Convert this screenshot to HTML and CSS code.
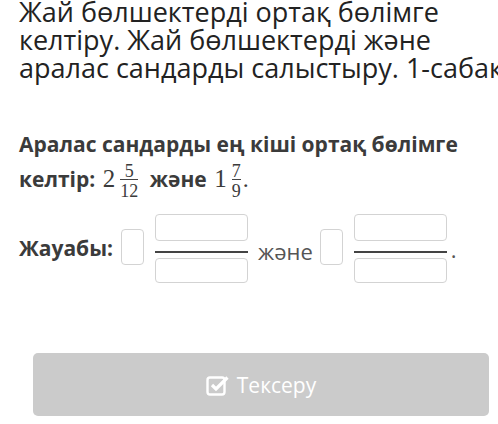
FILE: index.html
```html
<!DOCTYPE html>
<html>
<head>
<meta charset="utf-8">
<link rel="stylesheet" href="styles.css">
</head>
<body>
<div class="page">
  <h1 class="title">Жай бөлшектерді ортақ бөлімге<br>келтіру. Жай бөлшектерді және<br>аралас сандарды салыстыру. 1-сабақ</h1>
  <div class="question">
    <div class="q-line">Аралас сандарды ең кіші ортақ бөлімге</div>
    <div class="q-line q-second">келтір: <span class="whole">2</span><span class="frac"><span class="num">5</span><span class="bar"></span><span class="den">12</span></span> және <span class="whole">1</span><span class="frac"><span class="num">7</span><span class="bar"></span><span class="den">9</span></span><span class="dot">.</span></div>
  </div>
  <div class="answer">
    <span class="label">Жауабы:</span>
    <span class="box whole-box"></span>
    <span class="afrac"><span class="box nbox"></span><span class="abar"></span><span class="box dbox"></span></span>
    <span class="and">және</span>
    <span class="box whole-box"></span>
    <span class="afrac"><span class="box nbox"></span><span class="abar"></span><span class="box dbox"></span></span>
    <span class="adot">.</span>
  </div>
  <button class="check" type="button">
    <svg class="icon" width="24" height="22" viewBox="0 0 24 22"><rect x="1.5" y="3.5" width="17" height="17" rx="2.5" fill="none" stroke="#fff" stroke-width="2.4"/><path d="M6 11 L10 15 L21.5 3.5" fill="none" stroke="#fff" stroke-width="3.2" stroke-linejoin="miter"/></svg>
    <span>Тексеру</span>
  </button>
</div>
</body>
</html>
```
FILE: styles.css
```css
html, body { margin: 0; padding: 0; background: #fff; }
body { font-family: "Open Sans", sans-serif; width: 498px; height: 424px; overflow: hidden; }
.page { padding-left: 19px; }
.title {
  margin: -2px 0 0 0;
  font-weight: 400;
  font-size: 27px;
  line-height: 28px;
  color: #222;
  white-space: nowrap;
}
.question {
  margin-top: 49px;
  font-weight: 700;
  font-size: 21px;
  color: #3b3b3b;
}
.q-line { line-height: 26px; white-space: nowrap; }
.q-second { margin-top: 7px; }
.whole { font-family: "Liberation Serif", serif; font-weight: 400; font-size: 25px; margin-left: 2px; }
.frac {
  display: inline-flex;
  flex-direction: column;
  align-items: center;
  vertical-align: middle;
  margin: 0 6px 0 5px;
  font-family: "Liberation Serif", serif;
  font-weight: 400;
  font-size: 18px;
  line-height: 14px;
}
.frac .bar { align-self: stretch; height: 1px; background: #444; margin: 1px 0 4px; }
.frac + .dot { margin-left: -4px; }
.dot { font-family: "Liberation Serif", serif; font-weight: 400; font-size: 24px; }
.answer {
  margin-top: 16px;
  display: flex;
  align-items: flex-start;
  height: 70px;
}
.label { font-weight: 700; font-size: 21px; line-height: 28px; color: #3b3b3b; margin: 20px 8px 0 0; }
.box { display: block; box-sizing: border-box; border: 1px solid #d3d3d3; border-radius: 4px; background: #fff; }
.whole-box { width: 23px; height: 36px; margin-top: 15px; }
.afrac { display: flex; flex-direction: column; width: 93px; margin-left: 11px; }
.nbox { height: 27px; }
.abar { height: 2px; background: #444; margin: 10px 0 5px; }
.dbox { height: 25px; }
.and { font-size: 22px; line-height: 30px; color: #555; margin: 22px 7px 0 10px; }
.adot { font-size: 22px; line-height: 30px; color: #555; margin: 20px 0 0 4px; }
.check {
  display: flex;
  align-items: center;
  justify-content: center;
  gap: 7px;
  margin: 69px 0 0 14px;
  width: 456px;
  height: 63px;
  border: none;
  border-radius: 5px;
  background: #cbcbcb;
  color: #fff;
  font-family: "Open Sans", sans-serif;
  font-size: 21px;
  padding: 0;
}
.icon { display: block; margin-top: 0; }
```
